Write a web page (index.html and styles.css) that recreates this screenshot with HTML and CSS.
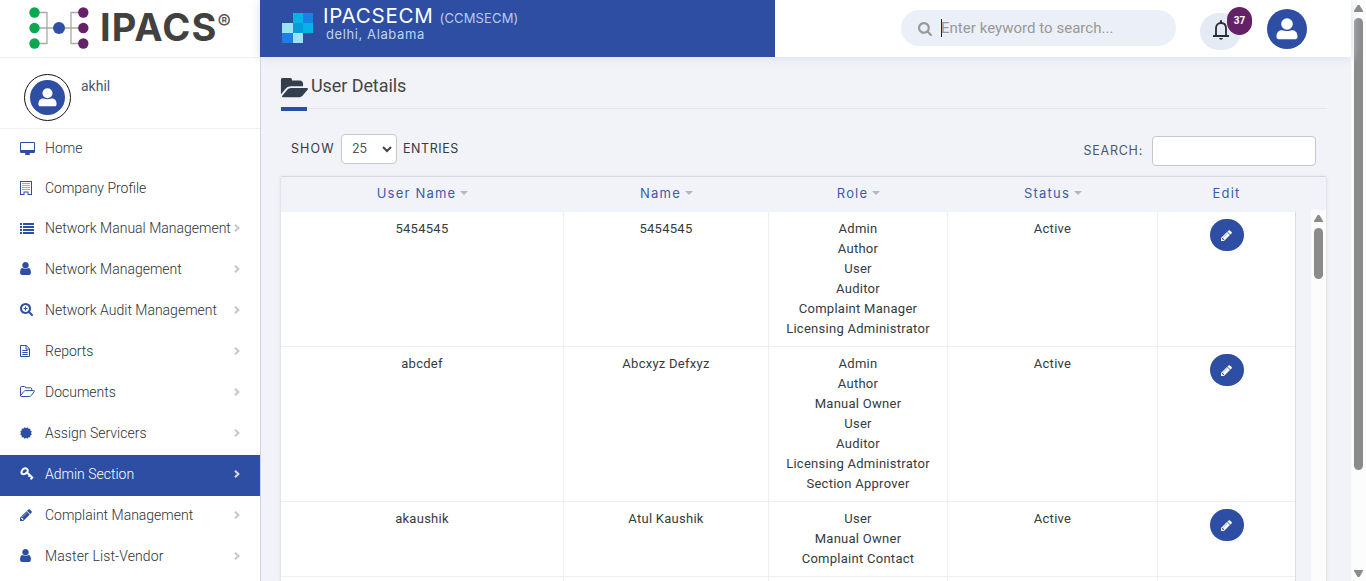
FILE: index.html
```html
<!DOCTYPE html>
<html lang="en">
<head>
<meta charset="utf-8">
<title>IPACS - User Details</title>
<link rel="stylesheet" href="styles.css">
</head>
<body>
<svg class="defs" aria-hidden="true">
  <symbol id="user" viewBox="256 128 1280 1536"><path d="M1536 1399q0 109-62.5 187t-150.5 78h-854q-88 0-150.5-78t-62.5-187q0-85 8.5-160.5t31.5-152 58.5-131 94-89 134.5-34.5q131 128 313 128t313-128q76 0 134.5 34.5t94 89 58.5 131 31.5 152 8.5 160.5zm-256-887q0 159-112.5 271.5t-271.5 112.5-271.5-112.5-112.5-271.5 112.5-271.5 271.5-112.5 271.5 112.5 112.5 271.5z"/></symbol>
  <symbol id="pencil" viewBox="128 128 1536 1536"><path d="M491 1536l91-91-235-235-91 91v107h128v128h107zm523-928q0-22-22-22-10 0-17 7l-542 542q-7 7-7 17 0 22 22 22 10 0 17-7l542-542q7-7 7-17zm-54-192l416 416-832 832h-416v-416zm683 96q0 53-37 90l-166 166-416-416 166-165q36-38 90-38 53 0 91 38l235 234q37 39 37 91z"/></symbol>
  <symbol id="search" viewBox="64 128 1664 1664"><path d="M1216 832q0-185-131.5-316.5t-316.5-131.5-316.5 131.5-131.5 316.5 131.5 316.5 316.5 131.5 316.5-131.5 131.5-316.5zm512 832q0 52-38 90t-90 38q-54 0-90-38l-343-342q-179 124-399 124-143 0-273.5-55.5t-225-150-150-225-55.5-273.5 55.5-273.5 150-225 225-150 273.5-55.5 273.5 55.5 225 150 150 225 55.5 273.5q0 220-124 399l343 343q37 37 37 90z"/></symbol>
  <symbol id="person" viewBox="0 0 22 22"><circle cx="11" cy="6" r="5.8"/><path d="M0.5 18.5c0-4.500 2.500-6.300 5.800-6.300 2.500 1.100 6.900 1.100 9.400 0 3.300 0 5.800 1.800 5.800 6.300 0 2-.6 2.700-2.300 2.700H2.800C1.100 21.200.5 20.500.5 18.500z"/></symbol>
  <symbol id="chevron" viewBox="0 0 6 8"><path d="M1 0.700 4.400 4 1 7.300" fill="none" stroke="currentColor" stroke-width="2"/></symbol>
</svg>
<div class="app">
  <aside class="sidebar">
    <div class="brand">
      <svg class="brand-mark" viewBox="0 0 60 42">
        <path d="M5 5.500h13v31H5M5 21h13M55 5.500H42v31h13M18 21h37" fill="none" stroke="#a9a9a9" stroke-width="1.300"/>
        <g fill="#0aa84f"><circle cx="5.500" cy="5.500" r="5.200"/><circle cx="5.500" cy="21" r="5.200"/><circle cx="5.500" cy="36.500" r="5.200"/></g>
        <circle cx="30" cy="21" r="6" fill="#2e4fa5"/>
        <g fill="#652165"><circle cx="54.300" cy="5.500" r="5.200"/><circle cx="54.300" cy="21" r="5.200"/><circle cx="54.300" cy="36.500" r="5.200"/></g>
      </svg>
      <span class="brand-name">IPACS</span><span class="reg">®</span>
    </div>
    <div class="profile">
      <div class="avatar-ring"><span class="avatar small"><svg><use href="#person"/></svg></span></div>
      <span class="profile-name">akhil</span>
    </div>
    <nav class="menu">
      <a class="item plain"><svg class="w15" viewBox="0 0 15 13"><path fill-rule="evenodd" d="M1.200 0h12.600Q15 0 15 1.200v8.500q0 1.200-1.200 1.200H9.500q.1.700.5 1.200.2.900-.7.900H5.700q-.9 0-.7-.9.400-.5.500-1.200H1.200Q0 10.900 0 9.700V1.200Q0 0 1.200 0zM1 1v7h13V1z"/></svg><span class="label">Home</span></a>
      <a class="item plain"><svg class="w11" viewBox="0 0 12 14"><path fill-rule="evenodd" d="M0 0h12v14H7.500v-2.500h-3V14H0zM1 1v12h2.500v-2.500h5V13H11V1z"/><path d="M2.500 2.500h7.500M2.500 4.500h7.500M2.500 6.500h7.500M2.500 8.500h7.500" stroke="currentColor" stroke-width="1" stroke-dasharray="1 1"/></svg><span class="label">Company Profile</span></a>
      <a class="item first"><svg class="w14 h11" viewBox="0 0 14 11"><path d="M0 0h2v2H0zM3 0h11v2H3zM0 3h2v2H0zM3 3h11v2H3zM0 6h2v2H0zM3 6h11v2H3zM0 9h2v2H0zM3 9h11v2H3z"/></svg><span class="label">Network Manual Management</span><svg class="chev"><use href="#chevron"/></svg></a>
      <a class="item"><svg class="w11 h12"><use href="#user"/></svg><span class="label">Network Management</span><svg class="chev"><use href="#chevron"/></svg></a>
      <a class="item"><svg class="w13" viewBox="64 128 1664 1664"><use href="#search" x="64" y="128" width="1664" height="1664"/><path d="M704 576h128v192h192v128H832v192H704V896H512V768h192z"/></svg><span class="label">Network Audit Management</span><svg class="chev"><use href="#chevron"/></svg></a>
      <a class="item"><svg class="w10" viewBox="0 0 10 12"><path d="M.5.500h5.700L9.500 3.800v7.700h-9zM6 .5v3.600h3.500M2.300 5.500h5.400M2.300 7.500h5.400M2.300 9.500h5.400" fill="none" stroke="currentColor"/></svg><span class="label">Reports</span><svg class="chev"><use href="#chevron"/></svg></a>
      <a class="item"><svg class="w15 h11" viewBox="0 0 15 11"><path d="M.5 9.800V1.500q0-1 1-1h3q1 0 1 1v.3h5.200q1 0 1 1v1.700M.5 9.800 3.600 5.600q.8-1 1.900-1h8.300q1 0 .4.900l-2.700 3.800q-.8 1.200-2 1.200H1.300q-.8 0-.8-.7z" fill="none" stroke="currentColor"/></svg><span class="label">Documents</span><svg class="chev"><use href="#chevron"/></svg></a>
      <a class="item"><svg class="w12" viewBox="-6 -6 12 12"><rect x="-4.300" y="-4.300" width="8.600" height="8.600"/><rect x="-4.300" y="-4.300" width="8.600" height="8.600" transform="rotate(30)"/><rect x="-4.300" y="-4.300" width="8.600" height="8.600" transform="rotate(60)"/></svg><span class="label">Assign Servicers</span><svg class="chev"><use href="#chevron"/></svg></a>
      <a class="item active"><svg class="w14" viewBox="0 0 14 13"><path d="M5 1.300C7.500 1.300 8.400 3.200 7.300 4.900 6 6.700 3.700 7.800 2.200 6.900.4 5.500 2.500 1.300 5 1.300z" fill="none" stroke="currentColor" stroke-width="2"/><path d="M6.800 5.300 13 11.300M8.500 9.700l1.900-2M10.600 12.300l2.400-2.500" stroke="currentColor" stroke-width="1.900" fill="none"/></svg><span class="label">Admin Section</span><svg class="chev"><use href="#chevron"/></svg></a>
      <a class="item"><svg class="w12"><use href="#pencil"/></svg><span class="label">Complaint Management</span><svg class="chev"><use href="#chevron"/></svg></a>
      <a class="item"><svg class="w11 h12"><use href="#user"/></svg><span class="label vendor">Master List-Vendor</span><svg class="chev"><use href="#chevron"/></svg></a>
    </nav>
  </aside>
  <div class="page">
    <header class="topbar">
      <div class="company">
        <svg class="company-mark" viewBox="0 0 31 30"><path fill="#03b4e4" d="M11 0h10v10H11zM21 10h10v10H21z"/><path fill="#1a80e6" d="M21 0h10v10H21zM0 20h11v10H0z"/><path fill="#9be3f6" d="M0 10h11v10H0zM11 20h10v10H11z"/><path fill="#059dda" d="M11 10h10v10H11z"/></svg>
        <div class="company-text">
          <div class="company-title"><span class="cname">IPACSECM</span><span class="ccode">(CCMSECM)</span></div>
          <div class="place">delhi, Alabama</div>
        </div>
      </div>
      <div class="tools">
        <div class="searchbox"><svg><use href="#search"/></svg><i class="caret"></i><span class="ph">Enter keyword to search...</span></div>
        <div class="bell"><svg viewBox="0 0 16 20"><path d="M3 15.500V8.200C3 4.800 5.200 3 8 3s5 1.800 5 5.200v7.300M0 16h16" fill="none" stroke="currentColor" stroke-width="1.800"/><path d="M7 .3h2v2.500H7zM6 18h4q-.5 1.700-2 1.700T6 18z"/></svg><b class="badge">37</b></div>
        <span class="avatar"><svg><use href="#person"/></svg></span>
      </div>
    </header>
    <main class="content">
      <h1 class="title"><svg viewBox="0 256 1943 1280"><path d="M1943 952q0 31-31 66l-336 396q-43 51-120.500 86.500t-143.500 35.500h-1088q-34 0-60.500-13t-26.500-43q0-31 31-66l336-396q43-51 120.500-86.500t143.500-35.500h1088q34 0 60.500 13t26.500 43zm-343-344v160h-832q-94 0-197 47.500t-164 119.500l-337 396-5 6q0-4-.5-12.500t-.5-12.500v-960q0-92 66-158t158-66h320q92 0 158 66t66 158v32h544q92 0 158 66t66 158z"/></svg><span>User Details</span></h1>
      <div class="filters">
        <div class="length"><span class="show">SHOW</span><div class="select"><span>25</span><svg viewBox="0 0 10 7"><path d="M1 1l4 4 4-4" fill="none" stroke="currentColor" stroke-width="2"/></svg></div><span class="entries">ENTRIES</span></div>
        <div class="find"><span>SEARCH:</span><input class="find-input" type="text"></div>
      </div>
      <section class="grid">
        <div class="row head"><div><span>User Name</span><i></i></div><div><span>Name</span><i></i></div><div><span>Role</span><i></i></div><div><span>Status</span><i></i></div><div><span>Edit</span></div></div>
        <div class="scroller">
          <div class="rows">
            <div class="row body"><div><p>5454545</p></div><div><p>5454545</p></div><div><p>Admin</p><p>Author</p><p>User</p><p>Auditor</p><p>Complaint Manager</p><p>Licensing Administrator</p></div><div><p>Active</p></div><div><button class="edit"><svg><use href="#pencil"/></svg></button></div></div>
            <div class="row body"><div><p>abcdef</p></div><div><p>Abcxyz Defxyz</p></div><div><p>Admin</p><p>Author</p><p>Manual Owner</p><p>User</p><p>Auditor</p><p>Licensing Administrator</p><p>Section Approver</p></div><div><p>Active</p></div><div><button class="edit"><svg><use href="#pencil"/></svg></button></div></div>
            <div class="row body"><div><p>akaushik</p></div><div><p>Atul Kaushik</p></div><div><p>User</p><p>Manual Owner</p><p>Complaint Contact</p></div><div><p>Active</p></div><div><button class="edit"><svg><use href="#pencil"/></svg></button></div></div>
            <div class="row body"><div></div><div></div><div></div><div></div><div></div></div>
          </div>
          <div class="inner-bar"><i class="up"></i><b></b></div>
        </div>
      </section>
    </main>
  </div>
  <div class="page-bar"><i class="up"></i><b></b><i class="down"></i></div>
</div>
</body>
</html>
```
FILE: styles.css
```css
* { box-sizing: border-box; }
body { margin: 0; height: 581px; overflow: hidden; font-family: Roboto, sans-serif; color: #343a40; background: #f2f3f8; }
svg { display: block; fill: currentColor; flex: none; }
p { margin: 0; }
.defs { position: absolute; width: 0; height: 0; }
.app { display: flex; width: 1366px; height: 581px; overflow: hidden; }

/* Sidebar */
.sidebar { width: 261px; flex: none; background: #fff; border-right: 1px solid #cfd0ea; }
.brand { height: 58px; padding: 7px 0 0 29px; display: flex; align-items: flex-start; border-bottom: 1px solid #f0f0f1; }
.brand-mark { width: 60px; height: 42px; }
.brand-name { margin-left: 11px; font: 700 38px/41px Inter, sans-serif; letter-spacing: 1.1px; color: #414141; }
.reg { margin-top: 2px; font: 500 20px/26px Inter, sans-serif; color: #555; }
.profile { height: 71px; border-bottom: 1px solid #f0f0f1; display: flex; padding: 16px 0 0 24px; }
.avatar-ring { width: 47px; height: 47px; border: 1px solid #111; border-radius: 50%; display: grid; place-items: center; }
.avatar { width: 40px; height: 40px; border-radius: 50%; background: #2d4ea3; color: #fff; display: grid; place-items: center; flex: none; }
.avatar svg { width: 22px; height: 22px; }
.avatar.small { width: 35px; height: 35px; }
.avatar.small svg { width: 19px; height: 19px; }
.profile-name { margin: 4px 0 0 10px; font-size: 14px; line-height: 16px; color: #48576a; }
.menu { padding-top: 1px; }
.item { height: 41px; display: grid; grid-template-columns: 25px 1fr 6px; align-items: center; padding: 0 20px 4px; color: #2d4ea3; }
.item.plain, .item.first { height: 40px; }
.item .label { font-size: 14px; font-weight: 300; line-height: 20px; color: #293238; white-space: nowrap; }
.item .vendor { letter-spacing: .12px; }
.chev { width: 6px; height: 8px; color: #c3c7d2; }
.item.active { background: #2d4ea3; color: #fff; }
.item.active .label { color: #fff; }
.item.active .chev { color: #d5dcee; }
.w15 { width: 15px; height: 13px; } .w14 { width: 14px; height: 13px; } .w13 { width: 13px; height: 13px; }
.w12 { width: 12px; height: 12px; } .w11 { width: 12px; height: 14px; } .w10 { width: 10px; height: 12px; }
.w11.h12 { width: 11px; height: 13px; }
.h11 { height: 11px; }

/* Header */
.page { width: 1090px; flex: none; }
.topbar { height: 57px; background: #fff; display: flex; justify-content: space-between; box-shadow: 0 1px 10px #d9dfec; position: relative; margin-left: -1px; }
.company { width: 515px; background: #2d4ea3; display: flex; padding: 13px 0 0 22px; color: #fff; font-family: Inter, sans-serif; }
.company-mark { width: 31px; height: 30px; }
.company-text { margin: -9px 0 0 10px; }
.company-title { line-height: 24px; height: 23px; white-space: nowrap; }
.cname { font-size: 20.500px; letter-spacing: .75px; }
.ccode { margin-left: 6px; font-size: 13px; letter-spacing: .15px; color: #b7cbf1; }
.place { margin-left: 3px; font-size: 13px; line-height: 15px; letter-spacing: .6px; color: #c1d2f2; }
.tools { display: flex; padding: 10px 44px 0 0; }
.searchbox { width: 275px; height: 36px; border-radius: 18px; background: #ebeff8; display: flex; align-items: center; padding-left: 17px; color: #999; }
.searchbox svg { width: 14px; height: 14px; margin-top: 2px; }
.caret { width: 1px; height: 18px; background: #222; margin: 0 -1px 0 9px; }
.ph { font-size: 15px; letter-spacing: .03px; white-space: nowrap; }
.bell { width: 41px; height: 37px; margin: 3px 26px 0 24px; border-radius: 20px; background: #e4ebf4; color: #252c36; display: grid; place-items: center; position: relative; }
.bell svg { width: 16px; height: 20px; margin-top: -3px; }
.badge { position: absolute; left: 27px; top: -6px; width: 25px; height: 28px; border-radius: 13px; background: #652165; color: #fff; font: 700 10px/28px Roboto, sans-serif; text-align: center; }
.tools > .avatar { margin-top: -1px; }

/* Content */
.content { padding: 19px 24px 0 20px; }
.title { margin: 0; height: 33px; border-bottom: 1px solid #e5e7ed; display: flex; position: relative; font-size: 18px; font-weight: 400; line-height: 20px; color: #454545; }
.title::after { content: ""; position: absolute; left: 0; bottom: -3px; width: 26px; height: 4px; background: #2d4ea3; }
.title svg { width: 28px; height: 20px; margin: 2px 0 0 -1px; color: #333f4f; }
.title span { margin-left: 3px; letter-spacing: -.08px; white-space: nowrap; }
.filters { height: 67px; display: flex; justify-content: space-between; padding: 25px 11px 0 10px; font: 12.500px/30px Inter, sans-serif; }
.length, .find { display: flex; white-space: nowrap; }
.show { width: 50px; letter-spacing: 1.1px; }
.entries { margin-left: 6px; letter-spacing: .55px; }
.find span { letter-spacing: .75px; }
.select { width: 56px; height: 30px; background: #fff; border: 1px solid #c8c8c8; border-radius: 4px; display: flex; align-items: center; justify-content: space-between; padding: 0 4px 0 10px; color: #555; }
.select svg { width: 10px; height: 7px; color: #444; }
.find { padding-top: 2px; color: #4d5667; }
.find-input { width: 164px; height: 30px; margin-left: 9px; background: #fff; border: 1px solid #c8c8c8; border-radius: 4px; }
.grid { width: 1045px; height: 405px; border-top: 1px solid #d5d7dc; box-shadow: 0 1px 3px #ccd0da; background: #f2f3f8; }
.row { display: grid; grid-template-columns: 283px 205px 179px 210px 137px; }
.head { height: 34px; font: 13px/32px Inter, sans-serif; letter-spacing: 1.2px; color: #3b5bb0; }
.head > div { display: flex; justify-content: center; align-items: center; height: 32px; }
.head i { margin-left: 4px; border: 4px solid transparent; border-top-color: #b2b7c7; border-bottom: 0; }
.scroller { display: flex; justify-content: space-between; }
.rows { width: 1015px; background: #fff; border-right: 1px solid #dcdde0; border-top: 1px solid #f2f3f8; }
.body { border-bottom: 1px solid #efeff1; font: 13px/20px Roboto, sans-serif; letter-spacing: .27px; text-align: center; color: #333c40; }
.body > div { padding: 7px 0; border-right: 1px solid #efeff1; min-height: 20px; }
.body > div:last-child { border-right: 0; }
.edit { display: grid; place-items: center; margin: 0 auto; width: 34px; height: 32px; padding: 0; border: 0; border-radius: 17px; background: #2d4ea3; color: #fff; }
.edit svg { width: 11px; height: 11px; }
.inner-bar { width: 15px; height: 375px; margin-top: -1px; background: #fcfcfc; padding-top: 5px; }
.inner-bar b, .page-bar b { display: block; width: 9px; margin: 0 auto; border-radius: 5px; background: #8b8b8b; }
.inner-bar b { height: 51px; margin-top: 6px; }
.up, .down { display: block; width: 9px; height: 7px; margin: 0 auto; background: #8b8b8b; }
.up { clip-path: polygon(40% 0, 60% 0, 100% 85%, 100% 100%, 0 100%, 0 85%); }
.down { clip-path: polygon(0 0, 100% 0, 100% 15%, 60% 100%, 40% 100%, 0 15%); }
.page-bar { width: 15px; height: 581px; background: #fcfcfc; padding-top: 5px; }
.page-bar b { height: 452px; margin-top: 6px; }
.page-bar .down { margin-top: 100px; }
```
